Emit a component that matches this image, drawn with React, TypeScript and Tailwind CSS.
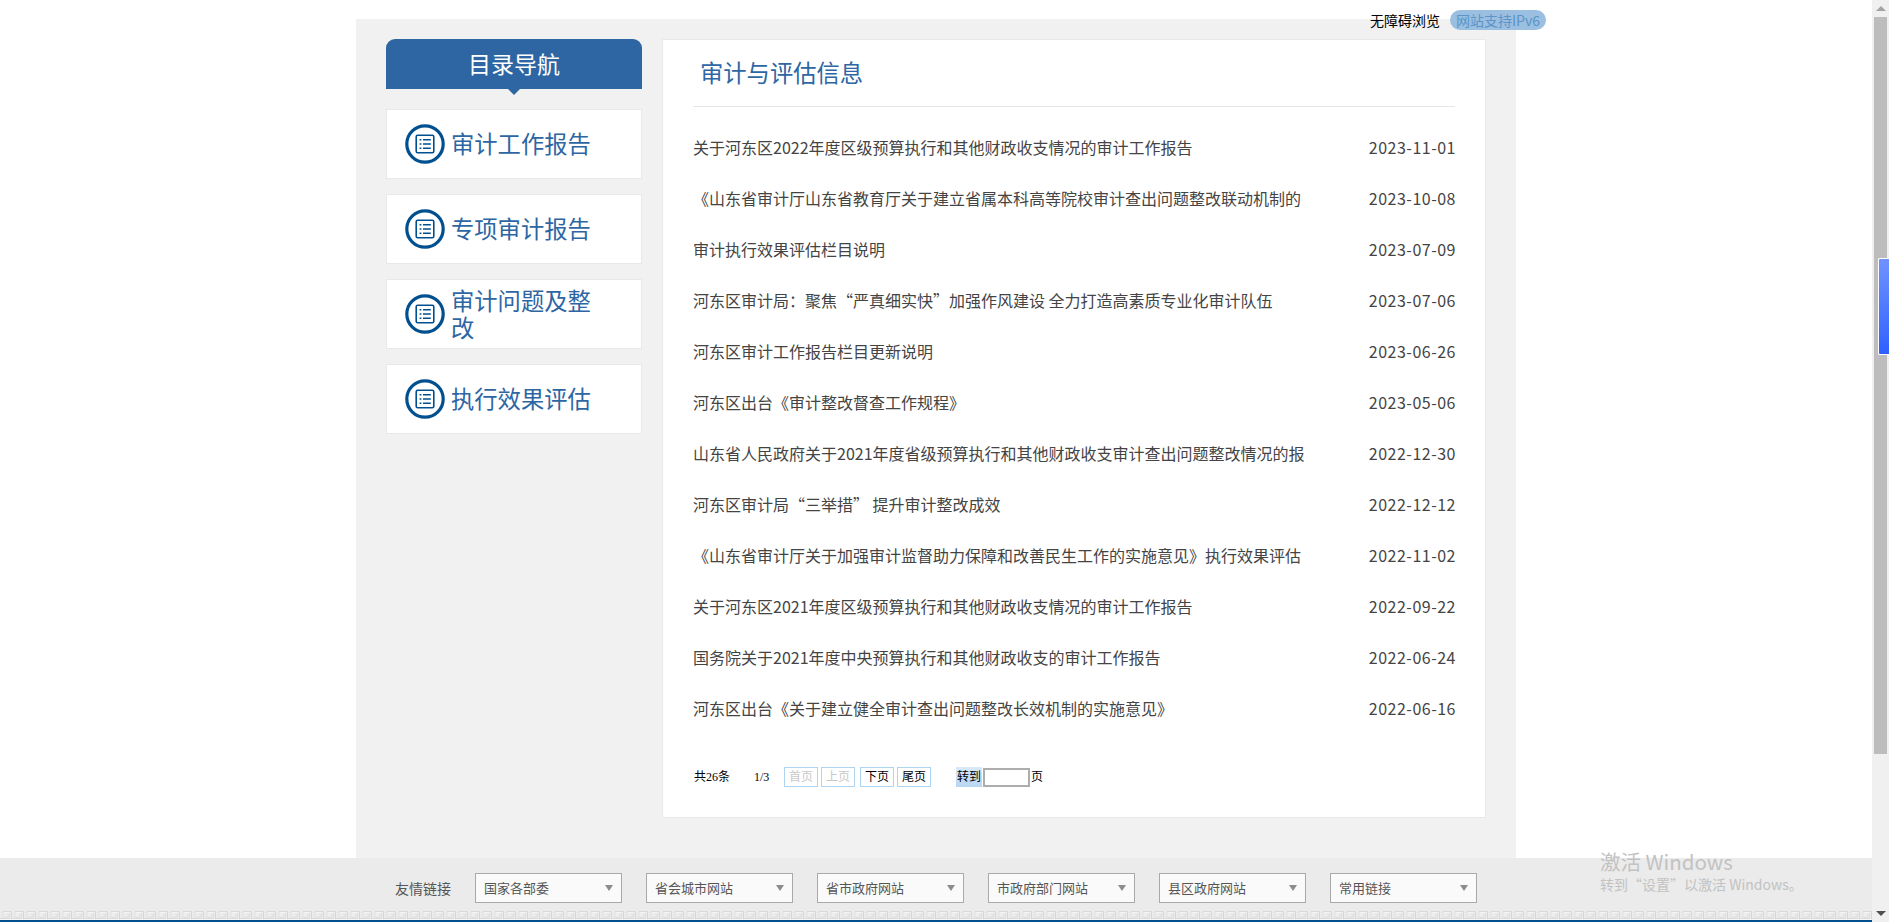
/**
 * 审计与评估信息 — audit list page with side nav, pager and friend-link footer.
 */
import React from 'react';

const navItems = ['审计工作报告', '专项审计报告', '审计问题及整改', '执行效果评估'];

const articles = [
  ['关于河东区2022年度区级预算执行和其他财政收支情况的审计工作报告', '2023-11-01'],
  ['《山东省审计厅山东省教育厅关于建立省属本科高等院校审计查出问题整改联动机制的', '2023-10-08'],
  ['审计执行效果评估栏目说明', '2023-07-09'],
  ['河东区审计局：聚焦“严真细实快”加强作风建设 全力打造高素质专业化审计队伍', '2023-07-06'],
  ['河东区审计工作报告栏目更新说明', '2023-06-26'],
  ['河东区出台《审计整改督查工作规程》', '2023-05-06'],
  ['山东省人民政府关于2021年度省级预算执行和其他财政收支审计查出问题整改情况的报', '2022-12-30'],
  ['河东区审计局“三举措” 提升审计整改成效', '2022-12-12'],
  ['《山东省审计厅关于加强审计监督助力保障和改善民生工作的实施意见》执行效果评估', '2022-11-02'],
  ['关于河东区2021年度区级预算执行和其他财政收支情况的审计工作报告', '2022-09-22'],
  ['国务院关于2021年度中央预算执行和其他财政收支的审计工作报告', '2022-06-24'],
  ['河东区出台《关于建立健全审计查出问题整改长效机制的实施意见》', '2022-06-16'],
];

const linkGroups = ['国家各部委', '省会城市网站', '省市政府网站', '市政府部门网站', '县区政府网站', '常用链接'];

function ListIcon() {
  return (
    <svg width="40" height="40" viewBox="0 0 40 40" className="shrink-0" fill="none">
      <circle cx="20" cy="20" r="18.2" stroke="#00508f" strokeWidth="3.2" />
      <rect x="11.2" y="11.2" width="17.6" height="17.6" rx="1.5" stroke="#00508f" strokeWidth="1.6" />
      <path d="M14.6 15.8h1.8M14.6 20h1.8M14.6 24.2h1.8" stroke="#00508f" strokeWidth="1.6" />
      <path d="M18 15.8H25.8M18 20H25.8M18 24.2H25.8" stroke="#00508f" strokeWidth="1.4" />
    </svg>
  );
}

function PageButton({ label, disabled }: { label: string; disabled?: boolean }) {
  return (
    <span
      className={`flex h-[20px] w-[34px] items-center justify-center border border-[#add4f0] ${
        disabled ? 'text-[#c8c8c8]' : 'text-black'
      }`}
    >
      {label}
    </span>
  );
}

function GreekKey() {
  return (
    <svg className="block h-[9px] w-full" aria-hidden="true">
      <defs>
        <pattern id="key" width="12" height="9" patternUnits="userSpaceOnUse">
          <path d="M0 8.5H11V1H3.5V5.5H7.5V3.5" fill="none" stroke="#f8f8f8" strokeWidth="1.6" />
          <path d="M0 7.5H10V1.5" fill="none" stroke="#d8d8d8" strokeWidth="1" />
          <path d="M11.5 8.5V0.5H3V6H8V3" fill="none" stroke="#d8d8d8" strokeWidth="1" />
        </pattern>
      </defs>
      <rect width="100%" height="9" fill="url(#key)" />
    </svg>
  );
}

export default function App() {
  return (
    <div className="relative flex h-[922px] w-[1889px] overflow-hidden bg-white font-['Noto_Sans_CJK_SC','Microsoft_YaHei',sans-serif]">
      <div className="flex min-w-0 flex-1 flex-col">
        {/* Main area */}
        <div className="mx-auto mt-[19px] flex h-[839px] w-[1160px] shrink-0 gap-[20px] bg-[#f1f1f1] pl-[30px] pt-[20px]">
          {/* Side nav */}
          <div className="w-[256px] shrink-0">
            <div className="relative flex h-[50px] items-center justify-center rounded-t-[9px] bg-[#2d66a3] pb-px text-[23px] text-white">
              目录导航
              <span className="absolute left-1/2 top-full h-0 w-0 -translate-x-1/2 border-x-[6px] border-t-[6px] border-x-transparent border-t-[#2d66a3]" />
            </div>
            <div className="mt-[20px] flex flex-col gap-[15px]">
              {navItems.map((item) => (
                <div
                  key={item}
                  className="flex h-[70px] items-center gap-[6px] border border-[#e8e8e8] bg-white pl-[18px]"
                >
                  <ListIcon />
                  <span className="w-[146px] pb-[1px] text-[23.3px] leading-[27px] text-[#2d66a3]">{item}</span>
                </div>
              ))}
            </div>
          </div>

          {/* Article list */}
          <div className="h-[779px] w-[824px] shrink-0 border border-[#e8e8e8] bg-white px-[30px]">
            <div className="flex h-[67px] items-center border-b border-[#e6e6e6] pb-[1px] pl-[7px] text-[23.3px] text-[#2d66a3]">
              审计与评估信息
            </div>
            <ul className="mt-[14px]">
              {articles.map(([title, date]) => (
                <li key={date} className="flex h-[51px] items-center justify-between text-[16px] text-[#444]">
                  <span className="truncate">{title}</span>
                  <span className="-mr-px ml-4 shrink-0 tracking-[0.5px]">{date}</span>
                </li>
              ))}
            </ul>
            <div className="ml-px mt-[34px] flex h-[20px] items-center font-['Liberation_Serif','Noto_Sans_CJK_SC',serif] text-[12px] text-black">
              <span className="w-[60px]">共26条</span>
              <span className="w-[30px]">1/3</span>
              <div className="flex gap-[3px]">
                <PageButton label="首页" disabled />
                <PageButton label="上页" disabled />
              </div>
              <div className="ml-[5px] flex gap-[3px]">
                <PageButton label="下页" />
                <PageButton label="尾页" />
              </div>
              <span className="ml-[25px] flex h-[20px] w-[26px] items-center justify-center bg-gradient-to-b from-[#dbe9f7] to-[#b6d6f3]">
                转到
              </span>
              <span className="ml-px h-[19px] w-[47px] border-2 border-[#adadad] bg-white" />
              <span className="ml-px">页</span>
            </div>
          </div>
        </div>

        {/* Friend links */}
        <div className="h-[64px] shrink-0 bg-[#ebebeb]">
          <div className="flex h-[53px] items-start pl-[395px] pt-[15px]">
            <span className="mt-[5px] w-[80px] text-[14px] text-[#555]">友情链接</span>
            <div className="flex gap-[24px]">
              {linkGroups.map((group) => (
                <div
                  key={group}
                  className="flex h-[30px] w-[147px] items-center justify-between border border-[#a9a9a9] bg-[#fafafa] px-[8px] text-[13px] text-[#555]"
                >
                  <span>{group}</span>
                  <span className="h-0 w-0 border-x-[4px] border-t-[6px] border-x-transparent border-t-[#8c8c8c]" />
                </div>
              ))}
            </div>
          </div>
          <GreekKey />
          <div className="h-[2px] bg-[#00508f]" />
        </div>
      </div>

      {/* Browser scrollbar */}
      <div className="flex w-[17px] shrink-0 flex-col items-center bg-[#f0f0f0]">
        <div className="flex h-[17px] items-center">
          <span className="h-0 w-0 border-x-[5px] border-b-[5px] border-x-transparent border-b-[#a3a3a3]" />
        </div>
        <div className="h-[737px] w-[13px] bg-[#bdbdbd]" />
        <div className="mt-auto flex h-[17px] items-center">
          <span className="h-0 w-0 border-x-[5px] border-t-[5px] border-x-transparent border-t-[#505050]" />
        </div>
      </div>

      {/* Overlays */}
      <div className="absolute left-[1370px] top-[10px] flex h-[20px] items-center text-[14px]">
        <span className="w-[80px] text-black">无障碍浏览</span>
        <span className="flex h-[20px] w-[96px] items-center justify-center rounded-full bg-[#9bbfe0] text-[#5b94c8]">
          网站支持IPv6
        </span>
      </div>
      <div className="absolute right-0 top-[258px] h-[97px] w-[11px] rounded-l-[2px] border-y border-l border-white bg-gradient-to-b from-[#7092ff] to-[#2e60ff]" />
      <div className="pointer-events-none absolute left-[1600px] top-[847px] text-[#c2c2c2]">
        <div className="text-[20.5px] leading-[28px]">激活 Windows</div>
        <div className="-mt-px text-[14px] leading-[20px]">转到“设置”以激活 Windows。</div>
      </div>
    </div>
  );
}
